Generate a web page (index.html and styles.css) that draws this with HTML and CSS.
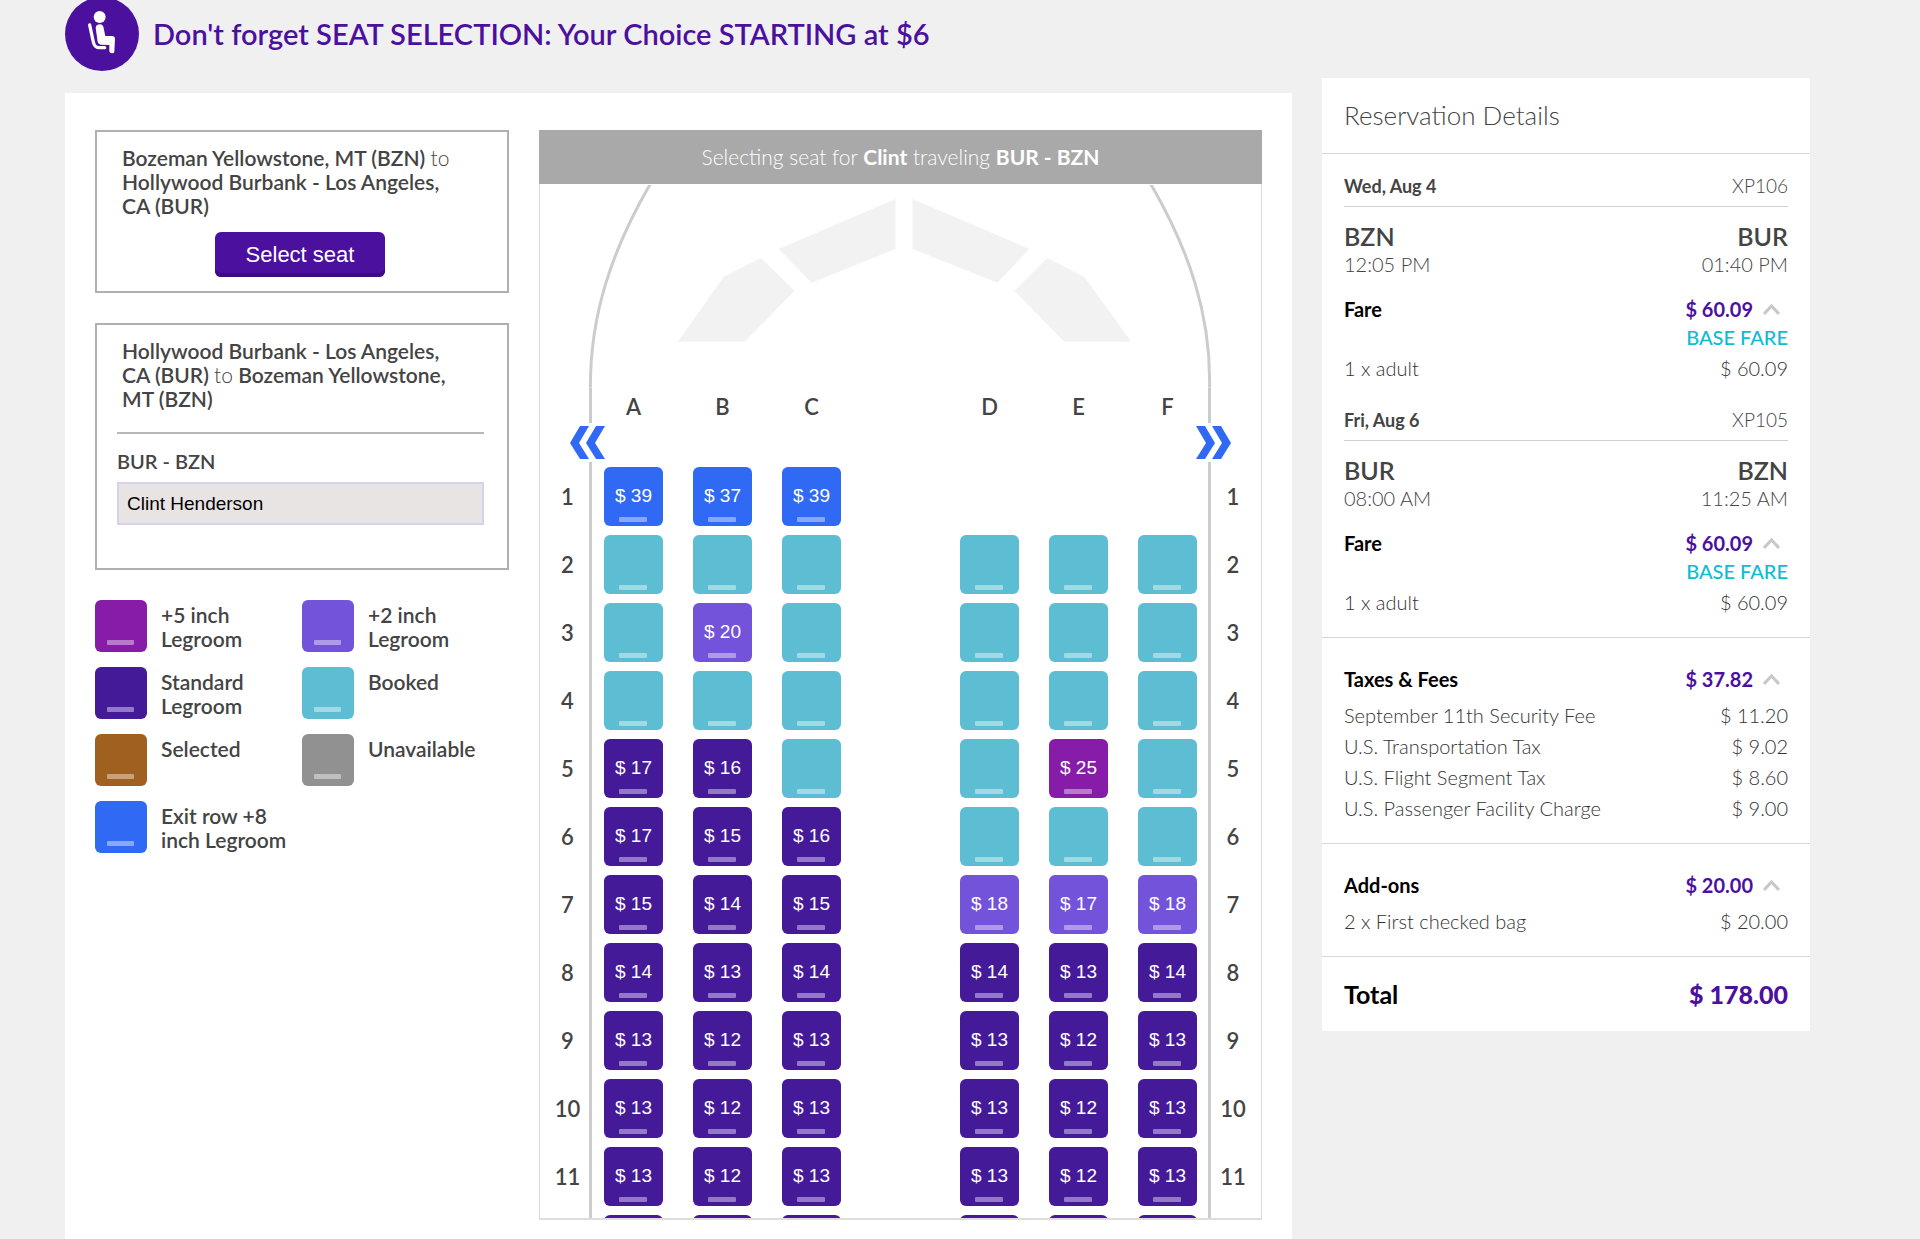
FILE: index.html
```html
<!DOCTYPE html>
<html lang="en">
<head>
    <meta charset="UTF-8">
    <meta name="viewport" content="width=device-width, initial-scale=1.0">
    <title>Seat Selection</title>
    <link rel="stylesheet" href="styles.css">
</head>
<body>
    <div class="page">
        <main class="content">
            <header class="promo">
                <svg class="promo-icon" viewBox="0 0 222 222" aria-hidden="true">
                    <circle cx="111" cy="111" r="111" fill="#4c109f"/>
                    <circle cx="104" cy="60" r="18" fill="#fff"/>
                    <path d="M74 84 L85 135 Q89 152 101 152 L119 152" fill="none" stroke="#fff" stroke-width="10" stroke-linecap="round" stroke-linejoin="round"/>
                    <path d="M92 92 Q94 82 105 82 Q115 83 116 94 L121 117 L142 117 Q150 118 150 126 L148 164 Q147 169 141 169 Q134 169 133 163 L133 144 L107 143 Q100 142 98 135 Z" fill="#fff"/>
                </svg>
                <h1>Don't forget SEAT SELECTION: Your Choice STARTING at $6</h1>
            </header>

            <div class="panel">
                <div class="side">
                    <section class="trip">
                        <p class="route">Bozeman Yellowstone, MT (BZN) <span>to</span> Hollywood Burbank - Los Angeles, CA (BUR)</p>
                        <button type="button" class="select-seat">Select seat</button>
                    </section>

                    <section class="trip trip-current">
                        <p class="route">Hollywood Burbank - Los Angeles, CA (BUR) <span>to</span> Bozeman Yellowstone, MT (BZN)</p>
                        <hr>
                        <label for="passenger">BUR - BZN</label>
                        <input type="text" id="passenger" name="passenger" value="Clint Henderson" readonly>
                    </section>

                    <ul class="legend">
                        <li><i class="seat plus5"></i><span>+5 inch Legroom</span></li>
                        <li><i class="seat plus2"></i><span>+2 inch Legroom</span></li>
                        <li><i class="seat standard"></i><span>Standard Legroom</span></li>
                        <li><i class="seat booked"></i><span>Booked</span></li>
                        <li><i class="seat selected"></i><span>Selected</span></li>
                        <li><i class="seat unavailable"></i><span>Unavailable</span></li>
                        <li><i class="seat exit"></i><span>Exit row +8 inch Legroom</span></li>
                    </ul>
                </div>

                <section class="map">
                    <h2 class="map-title">Selecting seat for <b>Clint</b> traveling <b>BUR - BZN</b></h2>
                    <div class="map-body">
                        <svg class="nose" viewBox="0 0 722 203" aria-hidden="true">
                            <g fill="none" stroke="#ccc" stroke-width="3">
                                <path d="M111 -2 C72 65 50 130 50.5 203"/>
                                <path d="M611 -2 C650 65 672 130 670.5 203"/>
                            </g>
                            <g fill="#f2f2f2">
                                <path d="M356 14 V64 L272 98 L239 64 Z"/>
                                <path d="M373 14 L490 64 L458 98 L373 64 Z"/>
                                <path d="M221 73 L255 106 L205 157 H138 L184 92 Z"/>
                                <path d="M508 73 L545 92 L592 157 H525 L475 106 Z"/>
                            </g>
                        </svg>
                        <div class="row letters">
                            <span class="num"></span>
                            <div class="cabin">
                                <div class="block"><span>A</span><span>B</span><span>C</span></div>
                                <div class="block"><span>D</span><span>E</span><span>F</span></div>
                            </div>
                            <span class="num"></span>
                        </div>
                        <div class="exits">
                            <svg viewBox="0 0 35 33" aria-label="Exit left"><path d="M10 0h9L9 17l10 16h-9L0 17zM26 0h9L25 17l10 16h-9L16 17z" fill="#306af4"/></svg>
                            <svg viewBox="0 0 35 33" aria-label="Exit right"><path d="M0 0h9l10 17L9 33H0l10-16zM16 0h9l10 17-10 16h-9l10-16z" fill="#306af4"/></svg>
                        </div>
                        <div id="rows"></div>
                    </div>
                </section>
            </div>
        </main>

        <aside class="summary">
            <h2>Reservation Details</h2>
            <section class="flights">
                <div class="leg">
                    <div class="leg-date"><b>Wed, Aug 4</b><span>XP106</span></div>
                    <div class="leg-stops">
                        <div><b>BZN</b><span>12:05 PM</span></div>
                        <div><b>BUR</b><span>01:40 PM</span></div>
                    </div>
                    <div class="line head">
                        <span>Fare</span>
                        <button type="button" class="toggle">$ 60.09 <svg viewBox="0 0 17 11" aria-hidden="true"><path d="M1 10 L8.500 2 L16 10"/></svg></button>
                    </div>
                    <p class="fare-type">BASE FARE</p>
                    <div class="line"><span>1 x adult</span><span>$ 60.09</span></div>
                </div>
                <div class="leg">
                    <div class="leg-date"><b>Fri, Aug 6</b><span>XP105</span></div>
                    <div class="leg-stops">
                        <div><b>BUR</b><span>08:00 AM</span></div>
                        <div><b>BZN</b><span>11:25 AM</span></div>
                    </div>
                    <div class="line head">
                        <span>Fare</span>
                        <button type="button" class="toggle">$ 60.09 <svg viewBox="0 0 17 11" aria-hidden="true"><path d="M1 10 L8.500 2 L16 10"/></svg></button>
                    </div>
                    <p class="fare-type">BASE FARE</p>
                    <div class="line"><span>1 x adult</span><span>$ 60.09</span></div>
                </div>
            </section>
            <section class="charges">
                <div class="line head">
                    <span>Taxes &amp; Fees</span>
                    <button type="button" class="toggle">$ 37.82 <svg viewBox="0 0 17 11" aria-hidden="true"><path d="M1 10 L8.500 2 L16 10"/></svg></button>
                </div>
                <div class="line"><span>September 11th Security Fee</span><span>$ 11.20</span></div>
                <div class="line"><span>U.S. Transportation Tax</span><span>$ 9.02</span></div>
                <div class="line"><span>U.S. Flight Segment Tax</span><span>$ 8.60</span></div>
                <div class="line"><span>U.S. Passenger Facility Charge</span><span>$ 9.00</span></div>
            </section>
            <section class="charges">
                <div class="line head">
                    <span>Add-ons</span>
                    <button type="button" class="toggle">$ 20.00 <svg viewBox="0 0 17 11" aria-hidden="true"><path d="M1 10 L8.500 2 L16 10"/></svg></button>
                </div>
                <div class="line"><span>2 x First checked bag</span><span>$ 20.00</span></div>
            </section>
            <div class="total"><span>Total</span><b>$ 178.00</b></div>
        </aside>
    </div>

    <script>
        // type letter + price; "-" is a booked seat, "" is no seat
        // e = exit row, s = standard, m = +2 inch, l = +5 inch
        const types = { e: 'exit', s: 'standard', m: 'plus2', l: 'plus5' };
        const seats = [
            ['e39', 'e37', 'e39', '', '', ''],
            ['-', '-', '-', '-', '-', '-'],
            ['-', 'm20', '-', '-', '-', '-'],
            ['-', '-', '-', '-', '-', '-'],
            ['s17', 's16', '-', '-', 'l25', '-'],
            ['s17', 's15', 's16', '-', '-', '-'],
            ['s15', 's14', 's15', 'm18', 'm17', 'm18'],
            ['s14', 's13', 's14', 's14', 's13', 's14'],
            ['s13', 's12', 's13', 's13', 's12', 's13'],
            ['s13', 's12', 's13', 's13', 's12', 's13'],
            ['s13', 's12', 's13', 's13', 's12', 's13'],
            ['s13', 's12', 's13', 's13', 's12', 's13']
        ];

        function seatHtml(seat, label) {
            if (seat === '') return '<span class="seat empty"></span>';
            if (seat === '-') return `<button type="button" class="seat booked" aria-label="${label} booked" disabled></button>`;
            return `<button type="button" class="seat ${types[seat[0]]}">$ ${seat.slice(1)}</button>`;
        }

        document.getElementById('rows').innerHTML = seats.map((row, i) => {
            const cells = row.map((seat, j) => seatHtml(seat, (i + 1) + 'ABCDEF'[j]));
            return `<div class="row">
                <span class="num">${i + 1}</span>
                <div class="cabin">
                    <div class="block">${cells.slice(0, 3).join('')}</div>
                    <div class="block">${cells.slice(3).join('')}</div>
                </div>
                <span class="num">${i + 1}</span>
            </div>`;
        }).join('');
    </script>
</body>
</html>
```
FILE: styles.css
```css
* { box-sizing: border-box; }
body { margin: 0; background: #f0f0f0; color: #444; font-family: Lato, "Open Sans", sans-serif; font-size: 20px; line-height: 24px; font-weight: 500; }
h1, h2, p, ul { margin: 0; padding: 0; }
button, input { font-family: "Liberation Sans", Arial, sans-serif; }
button { border: none; cursor: pointer; }

.page { display: flex; align-items: flex-start; gap: 30px; padding: 0 110px 0 65px; height: 100vh; overflow: hidden; }
.content { flex: 1; min-width: 0; }

.promo { display: flex; align-items: center; gap: 14px; margin-top: -3px; padding-bottom: 22px; color: #4c109f; }
.promo-icon { width: 74px; height: 74px; }
.promo h1 { font-size: 29px; line-height: 36px; font-weight: 600; }

.panel { display: flex; gap: 30px; min-height: calc(100vh - 93px); padding: 37px 30px 19px; background: #fff; }
.side { width: 414px; font-size: 21px; font-weight: 600; }

/* trips */
.trip { border: 2px solid #b0b0b0; padding: 14px 29px 14px 25px; margin-bottom: 30px; height: 163px; text-align: center; }
.trip-current { height: 247px; padding: 14px 23px 14px 20px; text-align: left; }
.route { padding-right: 16px; text-align: left; }
.trip-current .route { padding-left: 5px; }
.route span { font-weight: 300; }
.select-seat { margin-top: 14px; width: 170px; height: 45px; border-radius: 6px; background: #4c109f; box-shadow: inset 0 -4px #3d0a85; color: #fff; font-size: 22px; }
.trip hr { border: none; border-top: 2px solid #b8b8b8; margin: 21px 0 15px; }
.trip label { display: block; font-size: 20px; }
.trip input { display: block; width: 100%; height: 43px; margin-top: 9px; padding: 0 8px; border: 2px solid #d6d2ea; background: #e8e4e3; color: #000; font-size: 19px; }

/* seats */
.seat { position: relative; display: block; width: 59px; height: 59px; padding: 0; border-radius: 6px; color: #fff; font-size: 19px; }
.seat::after { content: ''; position: absolute; left: 15px; right: 16px; bottom: 4px; height: 5px; border-radius: 1px; background: rgba(255, 255, 255, 0.42); }
.seat.empty { visibility: hidden; }
.plus5 { background: #861ca8; }
.plus2 { background: #7353da; }
.standard { background: #451a99; }
.booked { background: #5dbdd2; cursor: default; }
.selected { background: #a06020; }
.unavailable { background: #919191; }
.exit { background: #306af4; }

.legend { display: grid; grid-template-columns: 1fr 1fr; gap: 15px 0; list-style: none; }
.legend li { display: flex; gap: 14px; }
.legend .seat { flex: none; width: 52px; height: 52px; }
.legend .seat::after { left: 12px; right: 13px; bottom: 7px; }
.legend span { padding-top: 3px; }

/* seat map */
.map { flex: 1; border: 1px solid #ddd; border-bottom-width: 2px; }
.map-title { margin: -1px -1px 0; background: #a9a9a9; color: #fff; font-size: 21px; line-height: 54px; font-weight: 300; text-align: center; }
.map-title b { font-weight: 700; }
.map-body { height: calc(100vh - 205px); padding-top: 1px; overflow-y: auto; scrollbar-width: none; }
.nose { display: block; width: 100%; }
.row { display: flex; }
.num { width: 49px; padding: 2px 0 0 6px; line-height: 66px; text-align: center; font-size: 22px; font-weight: 600; }
.num:last-child { width: 50px; padding: 2px 6px 0 0; }
.cabin { flex: 1; display: flex; justify-content: space-between; padding: 5px 11px 4px 12px; border: solid #ccc; border-width: 0 3px; }
.block { display: flex; gap: 30px; }
.letters .cabin { padding-top: 7px; }
.letters .num { line-height: 33px; }
.letters .block span { width: 59px; text-align: center; font-size: 22px; font-weight: 600; }
.exits { display: flex; justify-content: space-between; height: 39px; padding: 3px 30px; }
.exits svg { width: 35px; height: 33px; }

/* reservation */
.summary { width: 488px; margin-top: 78px; background: #fff; }
.summary h2 { padding: 0 22px; font-size: 26px; line-height: 75px; font-weight: 300; }
.summary section, .total { border-top: 1px solid #d8d8d8; padding: 0 22px; }
.leg-date, .leg-stops, .line, .total { display: flex; justify-content: space-between; }
.leg-date { border-bottom: 1px solid #d0d0d0; line-height: 40px; padding-top: 12px; font-size: 18px; }
.leg-date b { font-weight: 700; }
.leg-date span { font-weight: 300; font-size: 19px; }
.leg-stops { padding: 14px 0 19px; }
.leg-stops div:last-child { text-align: right; }
.leg-stops b { display: block; font-size: 25px; line-height: 31px; font-weight: 600; }
.leg-stops span { font-weight: 300; }
.line { line-height: 31px; font-weight: 300; color: #333; }
.head { line-height: 28px; font-weight: 700; color: #000; }
.toggle { display: flex; align-items: center; gap: 10px; padding: 0 8px 0 0; background: none; font: inherit; color: #4c109f; }
.toggle svg { width: 17px; height: 11px; fill: none; stroke: #c8c8c8; stroke-width: 3px; }
.fare-type { margin-bottom: 2px; line-height: 28px; text-align: right; color: #10bcd4; }
.leg { padding-bottom: 4px; }
.summary .flights { padding-bottom: 15px; }
.summary .charges { padding-top: 27px; padding-bottom: 19px; }
.charges .head { margin-bottom: 7px; }
.total { line-height: 74px; font-size: 25px; font-weight: 700; color: #000; }
.total b { color: #4c109f; }
```
